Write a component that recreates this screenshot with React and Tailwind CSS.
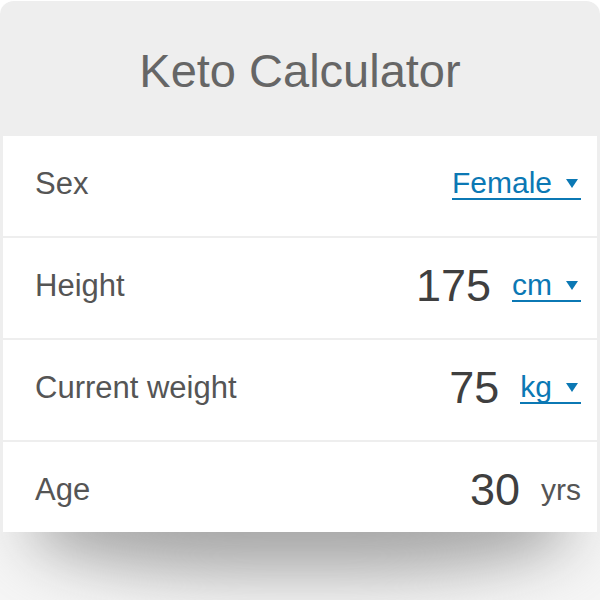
const ROWS = [
  { label: 'Sex', unit: 'Female', select: true },
  { label: 'Height', value: '175', unit: 'cm', select: true },
  { label: 'Current weight', value: '75', unit: 'kg', select: true },
  { label: 'Age', value: '30', unit: 'yrs' },
]

function Caret() {
  return (
    <svg width="12" height="9" viewBox="0 0 12 9" className="block">
      <path d="M0 0h12L6 9z" fill="currentColor" />
    </svg>
  )
}

function Unit({ row }) {
  if (!row.select) {
    return <span className="text-[30px] leading-none text-[#555555]">{row.unit}</span>
  }
  return (
    <span className="flex items-center gap-[14px] border-b-2 border-[#0b78b4] text-[30px] leading-none text-[#0b78b4]">
      {row.unit}
      <span className="pr-[3px] pt-[2px]">
        <Caret />
      </span>
    </span>
  )
}

export default function App() {
  return (
    <div className="min-h-[600px] w-[600px] bg-white font-['Liberation_Sans',Arial,sans-serif]">
      <div className="h-[532px] overflow-hidden rounded-t-[14px] border-t border-white bg-[#eeeeee]">
        <div className="flex h-[135px] items-center justify-center pt-[4px]">
          <h1 className="text-[47px] leading-none text-[#666666]">Keto Calculator</h1>
        </div>
        <div className="flex flex-col gap-[2px] px-[3px]">
          {ROWS.map((row) => (
            <div key={row.label} className="flex h-[100px] shrink-0 items-center justify-between bg-white pb-[5px] pl-[32px] pr-[16px]">
              <span className="text-[31px] leading-none text-[#555555]">{row.label}</span>
              <div className="flex items-center gap-[21px]">
                {row.value && <span className="text-[45px] leading-none text-[#3f3f3f]">{row.value}</span>}
                <Unit row={row} />
              </div>
            </div>
          ))}
        </div>
      </div>
      {/* soft drop shadow under the card */}
      <div className="h-[68px] overflow-hidden bg-[#f5f5f5]">
        <div className="mx-auto -mt-[70px] h-[110px] w-[540px] rounded-[40%] bg-[#a6a6a6] blur-[30px]" />
      </div>
    </div>
  )
}
